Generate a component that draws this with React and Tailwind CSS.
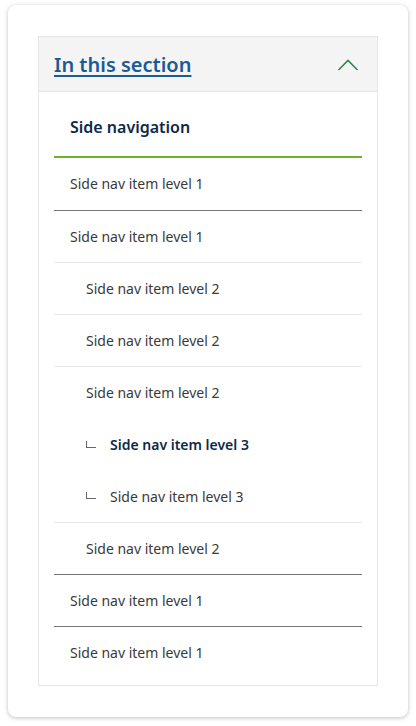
import React from "react";

const font = { fontFamily: '"Noto Sans", "Open Sans", sans-serif' };

function Branch() {
  return (
    <span className="w-6 flex items-center">
      <span className="block w-[10px] h-[7px] border-l border-b border-[#666] -mt-[2px]"></span>
    </span>
  );
}

function Row({ children, level = 1, border = "none", bold = false, branch = false, h = "h-[52px]" }) {
  const borderCls =
    border === "dark"
      ? "border-b border-[#757575]"
      : border === "light"
      ? "border-b border-[#e8e8e8]"
      : "";
  const pad = level === 1 ? "pl-4" : "pl-8";
  return (
    <div className={`${h} flex items-center ${pad} ${borderCls}`}>
      {branch && <Branch />}
      <span
        className={`text-[14px] leading-5 ${bold ? "font-semibold text-[#0e2a47]" : "text-[#3a3a3a]"}`}
      >
        {children}
      </span>
    </div>
  );
}

export default function App() {
  return (
    <div className="w-[416px] min-h-[726px] bg-white px-2 pt-[5px]" style={font}>
      <div className="rounded-lg bg-white shadow-[0_1px_4px_rgba(0,0,0,0.25)] px-[30px] pt-[31px] pb-[31px]">
        <div className="border border-[#e6e6e6]">
          <div className="h-[55px] bg-[#f4f4f4] border-b border-[#e6e6e6] flex items-center justify-between pl-[15px] pr-[17px]">
            <span className="text-[20px] font-semibold leading-7 text-[#1c5a96] underline underline-offset-[3px] decoration-[1.5px] mt-[1px]">
              In this section
            </span>
            <svg width="22" height="13" viewBox="0 0 22 13" fill="none" className="mr-[1px]">
              <polyline points="1.5,12 11,2.5 20.5,12" stroke="#2f8a4c" strokeWidth="1.6" />
            </svg>
          </div>
          <div className="px-[15px] pb-[6px]">
            <div className="h-[66px] flex items-end pb-[17px] pl-4 border-b-2 border-[#6cb22a]">
              <span className="text-[16px] font-semibold leading-6 text-[#0e2a47]">Side navigation</span>
            </div>
            <div>
              <Row border="dark" h="h-[53px]">Side nav item level 1</Row>
              <Row border="light">Side nav item level 1</Row>
              <Row level={2} border="light">Side nav item level 2</Row>
              <Row level={2} border="light">Side nav item level 2</Row>
              <div className="border-b border-[#e8e8e8]">
                <Row level={2}>Side nav item level 2</Row>
                <Row level={2} bold branch>Side nav item level 3</Row>
                <Row level={2} branch h="h-[51px]">Side nav item level 3</Row>
              </div>
              <Row level={2} border="dark">Side nav item level 2</Row>
              <Row border="dark">Side nav item level 1</Row>
              <Row>Side nav item level 1</Row>
            </div>
          </div>
        </div>
      </div>
    </div>
  );
}
